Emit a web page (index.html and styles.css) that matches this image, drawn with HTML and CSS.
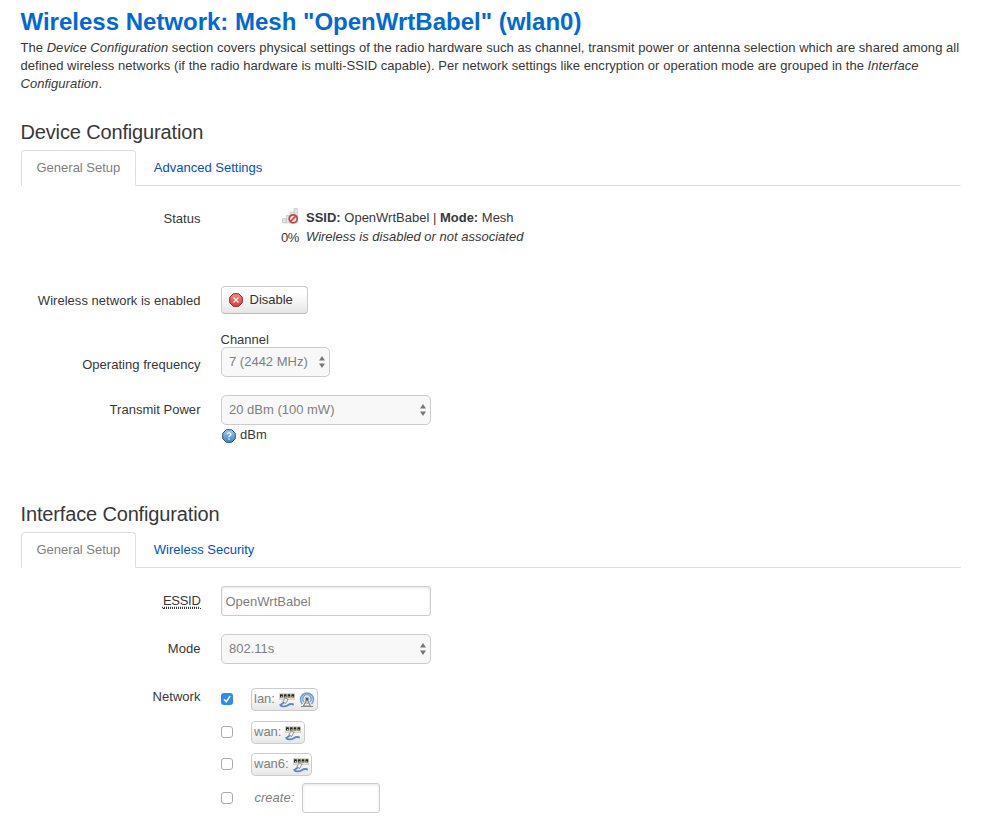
FILE: index.html
```
<!DOCTYPE html>
<html lang="en">
<head>
<meta charset="utf-8">
<title>Wireless Network</title>
<link rel="stylesheet" href="styles.css">
</head>
<body>
<svg class="defs" width="0" height="0" aria-hidden="true">
  <defs>
    <linearGradient id="blue" x2="0" y2="1"><stop stop-color="#9ccbf0"/><stop offset="1" stop-color="#3c86c8"/></linearGradient>
    <linearGradient id="red" x2="0" y2="1"><stop stop-color="#f58b86"/><stop offset="1" stop-color="#d83c3c"/></linearGradient>
    <symbol id="ethernet" viewBox="0 0 16 16">
      <path fill="#e4e4dc" stroke="#c4c4bc" stroke-width=".6" d="M.3 1.500h15.400v6H.3z"/>
      <path fill="#262620" d="M1 2.200h2.800v3.300H1zM4.800 2.200h2.800v3.300H4.800zM8.600 2.200h2.800v3.300H8.600zM12.400 2.200h2.800v3.300h-2.800z"/>
      <path fill="#d4c850" d="M2 4h1v1.500H2zM5.800 4h1v1.500h-1zM9.500 4h1v1.500h-1zM13.300 4h1v1.500h-1z"/>
      <path fill="#f4f4f4" stroke="#777" stroke-width=".8" d="M6 6l3 1.200-2.200 4.200-3-1.400z"/>
      <path fill="none" stroke="#5b87c2" stroke-width="1.800" d="M5 10.500L1.300 13c1 1.800 5 2 7.500.2 2-1.400 4-1.500 6-.6"/>
    </symbol>
    <symbol id="wifi" viewBox="0 0 16 16">
      <g fill="none" stroke="#6f9dcf"><path d="M3.500 12A6.400 6.400 0 1 1 12.500 12" stroke-width="1.600"/><path d="M5 10a4.300 4.300 0 1 1 6 0" stroke-width="1.400"/><circle cx="8" cy="7" r="2" stroke="#8cafd2"/></g>
      <path d="M8 7L4.500 14h7zM6 11h4M2 14.500h12" fill="none" stroke="#888" stroke-width="1.100"/>
      <circle cx="8" cy="7" r="1.300" fill="#555"/>
    </symbol>
  </defs>
</svg>
<main>
  <h2>Wireless Network: Mesh "OpenWrtBabel" (wlan0)</h2>
  <p class="intro">The <em>Device Configuration</em> section covers physical settings of the radio hardware such as channel, transmit power or antenna selection which are shared among all<br>defined wireless networks (if the radio hardware is multi-SSID capable). Per network settings like encryption or operation mode are grouped in the <em>Interface</em><br><em>Configuration</em>.</p>

  <section class="device">
    <h3>Device Configuration</h3>
    <ul class="tabs"><li class="active"><a>General Setup</a></li><li><a>Advanced Settings</a></li></ul>
    <div class="row status">
      <label>Status</label>
      <div class="signal">
        <svg width="16" height="16" viewBox="0 0 16 16"><g fill="#e3e3e0" stroke="#c5c5c1" stroke-width=".7"><path d="M.5 10.500h3.800v4.500H.5zM4.300 7.500h3.800V15H4.300zM8.100 4h3.800v11H8.100zM11.900.5h3.600V15h-3.600z"/></g><circle cx="11.200" cy="10.800" r="4" fill="#eee" fill-opacity=".8" stroke="#cc4146" stroke-width="1.700"/><path d="M8.500 13.400l5.300-5.300" stroke="#cc4146" stroke-width="1.500"/></svg>
        <span>0%</span>
      </div>
      <div class="info"><strong>SSID:</strong> OpenWrtBabel | <strong>Mode:</strong> Mesh<br><em>Wireless is disabled or not associated</em></div>
    </div>
    <div class="row enabled">
      <label>Wireless network is enabled</label>
      <button class="btn"><svg width="14" height="14" viewBox="0 0 14 14"><path d="M4.300.7h5.400l3.600 3.600v5.400l-3.600 3.600H4.300L.7 9.700V4.300z" fill="url(#red)" stroke="#8e2428"/><path d="M4.500 4.500l5 5m0-5l-5 5" stroke="#fff" stroke-width="1.100"/></svg>Disable</button>
    </div>
    <div class="row frequency">
      <label>Operating frequency</label>
      <div><div class="caption">Channel</div><div class="select short">7 (2442 MHz)<svg width="6" height="12" viewBox="0 0 6 12"><path d="M3 0l3 4.500H0zM3 12l3-4.500H0z"/></svg></div></div>
    </div>
    <div class="row power">
      <label>Transmit Power</label>
      <div><div class="select">20 dBm (100 mW)<svg width="6" height="12" viewBox="0 0 6 12"><path d="M3 0l3 4.500H0zM3 12l3-4.500H0z"/></svg></div>
      <div class="help"><svg width="14" height="14" viewBox="0 0 14 14"><path d="M4.300.7h5.400l3.600 3.600v5.400l-3.600 3.600H4.300L.7 9.700V4.300z" fill="url(#blue)" stroke="#28587f"/><path d="M5 5.300C5 3.300 9 3.300 9 5.300 9 6.600 7 6.500 7 8.300M7 9.500v1.300" fill="none" stroke="#fff" stroke-width="1.300"/></svg><span>dBm</span></div></div>
    </div>
  </section>

  <section>
    <h3>Interface Configuration</h3>
    <ul class="tabs"><li class="active"><a>General Setup</a></li><li><a>Wireless Security</a></li></ul>
    <div class="row essid">
      <label><span class="abbr">ESSID</span></label>
      <input class="text" type="text" value="OpenWrtBabel">
    </div>
    <div class="row mode">
      <label>Mode</label>
      <div class="select">802.11s<svg width="6" height="12" viewBox="0 0 6 12"><path d="M3 0l3 4.500H0zM3 12l3-4.500H0z"/></svg></div>
    </div>
    <div class="row network">
      <label>Network</label>
      <div class="networks">
        <div class="net"><span class="check on"><svg width="12" height="12" viewBox="0 0 12 12"><path d="M3 6.300l2.200 2.400L9.200 3" fill="none" stroke="#fff" stroke-width="1.600"/></svg></span><span class="badge">lan: <svg width="16" height="16"><use href="#ethernet"/></svg><svg width="16" height="16"><use href="#wifi"/></svg></span></div>
        <div class="net wan"><span class="check"></span><span class="badge">wan: <svg width="16" height="16"><use href="#ethernet"/></svg></span></div>
        <div class="net"><span class="check"></span><span class="badge">wan6: <svg width="16" height="16"><use href="#ethernet"/></svg></span></div>
        <div class="net create"><span class="check"></span><em>create:</em><input class="text" type="text"></div>
      </div>
    </div>
  </section>
</main>
</body>
</html>
```
FILE: styles.css
```
* { box-sizing: border-box; }
body { margin: 0; background: #fff; color: #383838; font: 13px/18px "Liberation Sans", Arial, sans-serif; overflow: hidden; }
.defs { display: block; }
main { padding: 3px 20px 0 20.5px; }
h2 { margin: 0; height: 36px; font-size: 24px; line-height: 37px; color: #0069d6; white-space: nowrap; }
.intro { margin: 0; white-space: nowrap; letter-spacing: .041px; }
h3 { margin: 0; font-size: 20px; line-height: 36px; font-weight: 400; height: 36px; letter-spacing: -.15px; }
.device { margin-top: 21px; height: 382px; }
.tabs { display: flex; list-style: none; margin: 0; padding: 0; height: 36px; border-bottom: 1px solid #ddd; }
.tabs a { display: block; height: 36px; padding: 0 15px; line-height: 33px; border: 1px solid transparent; border-radius: 4px 4px 0 0; margin-right: 2px; color: #0050cf; }
.tabs li:last-child a { margin-left: -.5px; }
.tabs .active a { color: #808080; background: #fff; border-color: #ddd #ddd #fff; }
.row { display: flex; align-items: flex-start; }
.row > label { width: 180px; margin-right: 20px; text-align: right; flex: none; letter-spacing: .03px; }
.status { padding-top: 23px; height: 100px; }
.status label { padding-top: 1px; }
.signal { display: flex; flex-direction: column; align-items: center; width: 20px; margin-left: 59.500px; }
.signal svg { margin-top: -1px; }
.signal span { margin-top: 5px; letter-spacing: -.3px; }
.info { margin-left: 6px; line-height: 19px; margin-top: -1px; }
.enabled { height: 44px; }
.enabled label { padding-top: 6px; }
.btn { display: flex; align-items: center; width: 87px; height: 28px; padding: 0 7px; gap: 7px; font: inherit; color: #333; border: 1px solid #ccc; border-bottom-color: #bbb; border-radius: 4px; background: linear-gradient(#fff, #fff 25%, #e6e6e6); }
.frequency { height: 65px; }
.frequency label { padding-top: 26px; }
.caption { height: 17px; line-height: 20px; }
.select { display: flex; align-items: center; justify-content: space-between; width: 210px; height: 30px; padding: 0 4px 0 7.500px; color: #808080; background: #f8f8f8; border: 1px solid #ccc; border-radius: 5px; }
.select svg { fill: #777; }
.short { width: 109px; }
.power label, .mode label, .essid label { padding-top: 6px; }
.help { display: flex; align-items: center; gap: 4.500px; padding-left: 1px; height: 21px; }
.help span { margin-top: -2px; }
.essid { margin-top: 18px; height: 48px; }
.abbr { border-bottom: 1px dotted #333; text-decoration: underline dotted; text-underline-offset: 2px; letter-spacing: -.3px; }
.text { width: 210px; height: 30px; margin: 0; padding: 0 4px; font: inherit; color: #808080; border: 1px solid #ccc; border-radius: 3px; background: #fff; box-shadow: inset 0 1px 3px rgba(0,0,0,.1); }
.mode { height: 54px; }
.networks { display: flex; flex-direction: column; color: #808080; }
.net { display: flex; align-items: center; height: 23px; margin-bottom: 10px; }
.wan { margin-bottom: 9px; }
.check { width: 12px; height: 12px; margin: 0 18px 2px 0; border: 1px solid #aaa; border-radius: 3px; background: #fff; }
.check.on { border: 0; background: #2c8bf6; }
.check svg { display: block; }
.badge { display: flex; align-items: center; gap: 4px; height: 23px; padding: 0 2.500px 2px; border: 1px solid #ccc; border-radius: 4px; background: linear-gradient(#fff, #fff 25%, #e6e6e6); }
.badge svg { margin-top: 2px; }
.create { height: 30px; margin: -3px 0 0; }
.create .check { margin-bottom: 0; }
.create em { margin-left: 4px; }
.create .text { width: 78px; margin-left: 8px; }
```
